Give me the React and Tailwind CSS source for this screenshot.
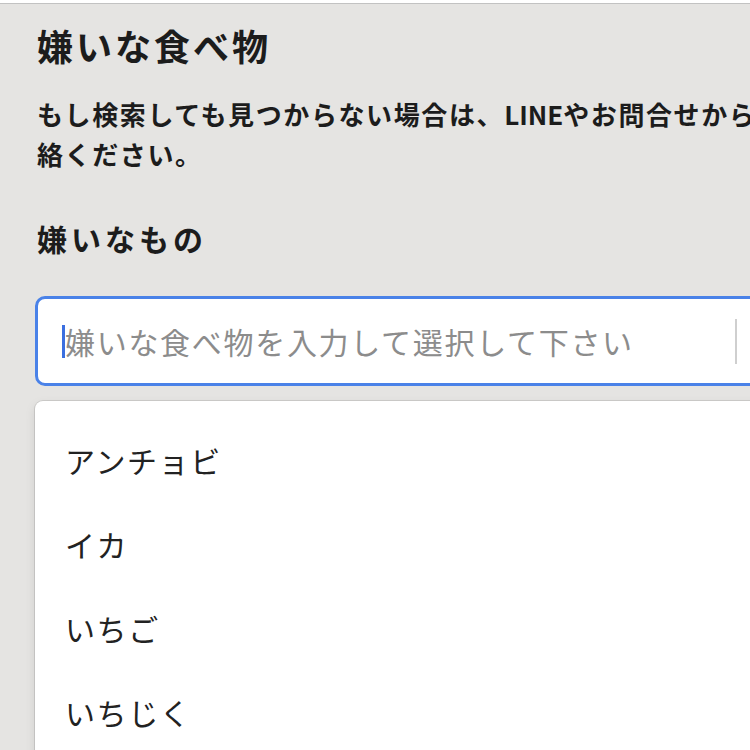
import React from 'react';

const FONT = { fontFamily: '"Noto Sans CJK JP", "Noto Sans", sans-serif' };

const options = ['アンチョビ', 'イカ', 'いちご', 'いちじく'];

export default function App() {
  return (
    <div className="w-[750px] h-[750px] overflow-hidden bg-[#e5e4e2] text-[#1c1c1c]" style={FONT}>
      {/* top edge */}
      <div className="h-[3px] bg-white" />
      <div className="h-px bg-[#c2c2c2]" />

      <div className="w-[820px] pl-[37px]">
        <h1 className="mt-[22px] text-[36px] leading-[38px] font-bold tracking-[3px]">嫌いな食べ物</h1>

        <p className="mt-[30px] text-[26px] leading-[40px] font-bold tracking-[1.6px] whitespace-nowrap">
          もし検索しても見つからない場合は、<span className="tracking-normal">LINE</span>やお問合せから連
          <br />
          絡ください。
        </p>

        <h2 className="mt-[47px] text-[30px] leading-[34px] font-bold tracking-[4px]">嫌いなもの</h2>

        {/* select control */}
        <div className="mt-[41px] -ml-[2px] h-[90px] w-[780px] flex items-center bg-white border-[3px] border-[#4a82e8] rounded-[10px]">
          <div className="w-[697px] pl-[24px] flex items-center">
            <span className="inline-block w-[3px] h-[33px] bg-[#3b6fe0]" />
            <span className="text-[30px] leading-[40px] tracking-[1.7px] text-[#8c8c8c]">嫌いな食べ物を入力して選択して下さい</span>
          </div>
          <div className="w-[2px] h-[45px] bg-[#cfcfcf]" />
        </div>

        {/* menu */}
        <div className="mt-[15px] -ml-[2px] w-[780px] h-[400px] pt-[17px] bg-white rounded-tl-[8px] shadow-[0_0_0_1px_rgba(0,0,0,0.1),0_4px_11px_rgba(0,0,0,0.1)]">
          {options.map((o) => (
            <div key={o} className="h-[84px] pl-[30px] flex items-center text-[30px] tracking-[1.6px] text-[#222]">
              {o}
            </div>
          ))}
        </div>
      </div>
    </div>
  );
}
